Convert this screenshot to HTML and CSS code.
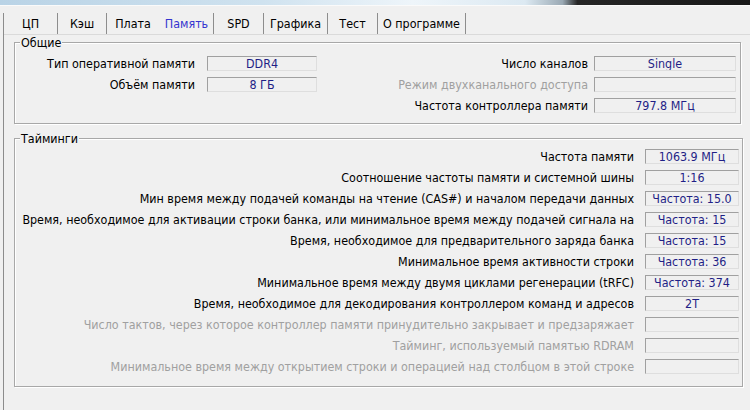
FILE: index.html
```html
<!DOCTYPE html>
<html lang="ru">
<head>
<meta charset="utf-8">
<title>CPU-Z Память</title>
<link rel="stylesheet" href="styles.css">
</head>
<body>
<div class="strip"></div>
<div class="window">
  <div class="tabs">
    <div class="tab t-cpu">ЦП</div>
    <div class="tab t-cache">Кэш</div>
    <div class="tab t-board no-sep">Плата</div>
    <div class="tab t-mem active">Память</div>
    <div class="tab t-spd">SPD</div>
    <div class="tab t-gfx">Графика</div>
    <div class="tab t-test">Тест</div>
    <div class="tab t-about">О программе</div>
  </div>
  <div class="panel">
    <fieldset class="group general">
      <legend>Общие</legend>
      <div class="ggrid">
        <div class="lbl l1">Тип оперативной памяти</div><div class="box">DDR4</div>
        <div class="lbl l2">Число каналов</div><div class="box">Single</div>
        <div class="lbl l1">Объём памяти</div><div class="box">8 ГБ</div>
        <div class="lbl l2 dis">Режим двухканального доступа</div><div class="box"></div>
        <div class="lbl l1"></div><div class="blank"></div>
        <div class="lbl l2">Частота контроллера памяти</div><div class="box">797.8 МГц</div>
      </div>
    </fieldset>
    <fieldset class="group timings">
      <legend>Тайминги</legend>
      <div class="tgrid">
        <div class="lbl">Частота памяти</div><div class="box">1063.9 МГц</div>
        <div class="lbl">Соотношение частоты памяти и системной шины</div><div class="box">1:16</div>
        <div class="lbl">Мин время между подачей команды на чтение (CAS#) и началом передачи данных</div><div class="box">Частота: 15.0</div>
        <div class="lbl">Время, необходимое для активации строки банка, или минимальное время между подачей сигнала на</div><div class="box">Частота: 15</div>
        <div class="lbl">Время, необходимое для предварительного заряда банка</div><div class="box">Частота: 15</div>
        <div class="lbl">Минимальное время активности строки</div><div class="box">Частота: 36</div>
        <div class="lbl">Минимальное время между двумя циклами регенерации (tRFC)</div><div class="box">Частота: 374</div>
        <div class="lbl">Время, необходимое для декодирования контроллером команд и адресов</div><div class="box">2T</div>
        <div class="lbl dis">Число тактов, через которое контроллер памяти принудительно закрывает и предзаряжает</div><div class="box"></div>
        <div class="lbl dis">Тайминг, используемый памятью RDRAM</div><div class="box"></div>
        <div class="lbl dis">Минимальное время между открытием строки и операцией над столбцом в этой строке</div><div class="box"></div>
      </div>
    </fieldset>
  </div>
</div>
</body>
</html>
```
FILE: styles.css
```css
html, body {
  margin: 0;
  padding: 0;
}
body {
  width: 750px;
  height: 410px;
  overflow: hidden;
  background: #f0f0f0;
  font-family: "DejaVu Sans Condensed", "DejaVu Sans", sans-serif;
  font-size: 12.4px;
  color: #000;
}
.strip {
  height: 5px;
  background: linear-gradient(to right, #b9d3e6 0%, #cfe2ef 35%, #eef5fa 55%, #dce9f2 70%, #9aa9b4 75%, #262626 77%, #181818 100%);
  border-bottom: 1px solid #fafafa;
}
.window {
  margin-left: 3px;
  border-left: 1px solid #8c8c8c;
  height: 404px;
  box-sizing: border-box;
}
.tabs {
  display: flex;
  margin-top: 7px;
  height: 21px;
}
.tab {
  box-sizing: border-box;
  height: 21px;
  line-height: 22px;
  text-align: center;
  border-right: 1px solid #8d8d8d;
  white-space: nowrap;
}
.tab.no-sep { border-right-color: transparent; }
.tab.active { color: #3535cf; }
.t-cpu { width: 54px; }
.t-cache { width: 49px; }
.t-board { width: 53px; }
.t-mem { width: 54px; }
.t-spd { width: 50px; }
.t-gfx { width: 64px; }
.t-test { width: 50px; }
.t-about { width: 88px; }
.panel {
  border-top: 1px solid #dadada;
  padding: 1px 0 0 10px;
}
.group {
  box-sizing: border-box;
  margin: 0;
  padding: 7px 4px 10px 0;
  border: 1px solid #a8a8a8;
  box-shadow: inset 1px 1px 0 #fff, 1px 1px 0 #fff;
}
.group legend {
  margin-left: 5px;
  padding: 0 1px;
  line-height: 13px;
  background: #f0f0f0;
}
.general { width: 727px; }
.timings {
  width: 729px;
  margin-top: 8px;
  padding: 4px 3px 12px 0;
}
.ggrid {
  display: grid;
  grid-template-columns: 192px 110px minmax(0, 1fr) 142px;
  grid-auto-rows: 15px;
  row-gap: 6px;
}
.tgrid {
  display: grid;
  grid-template-columns: minmax(0, 1fr) 94px;
  column-gap: 11px;
  grid-auto-rows: 15px;
  row-gap: 6px;
}
.lbl {
  text-align: right;
  line-height: 15px;
  white-space: nowrap;
}
.l1 { padding-right: 12px; }
.l2 { padding-right: 6px; }
.dis { color: #a0a0a0; }
.box {
  box-sizing: border-box;
  height: 15px;
  line-height: 13px;
  text-align: center;
  color: #1f1f86;
  border: 1px solid;
  border-color: #a0a0a0 #dedede #dedede #a0a0a0;
  white-space: nowrap;
  overflow: hidden;
}
```
